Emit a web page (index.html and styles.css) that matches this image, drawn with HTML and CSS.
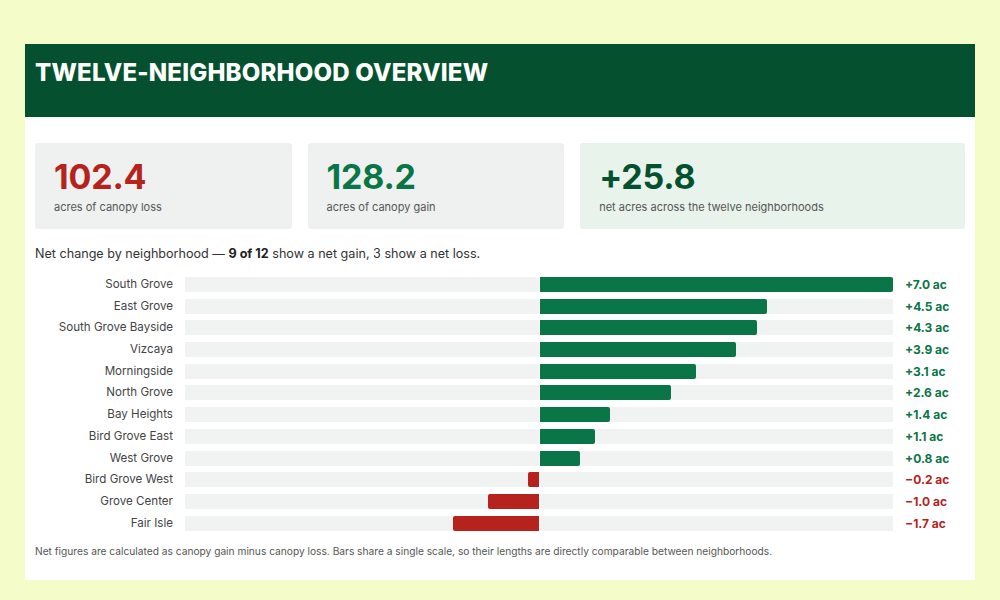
FILE: index.html
```html
<!DOCTYPE html>
<html lang="en">
<head>
<meta charset="utf-8">
<title>Twelve-Neighborhood Overview</title>
<link rel="stylesheet" href="styles.css">
</head>
<body>
<div class="card">
  <header class="header">
    <h1 class="title">TWELVE-NEIGHBORHOOD OVERVIEW</h1>
  </header>
  <section class="content">
    <div class="stats">
      <div class="stat">
        <div class="stat-num loss">102.4</div>
        <div class="stat-label">acres of canopy loss</div>
      </div>
      <div class="stat">
        <div class="stat-num gain">128.2</div>
        <div class="stat-label">acres of canopy gain</div>
      </div>
      <div class="stat stat-net">
        <div class="stat-num net">+25.8</div>
        <div class="stat-label">net acres across the twelve neighborhoods</div>
      </div>
    </div>
    <p class="subtitle">Net change by neighborhood — <strong>9 of 12</strong> show a net gain, 3 show a net loss.</p>
    <div class="chart">
      <div class="row"><span class="name">South Grove</span><div class="track"><div class="half neg"></div><div class="half pos"><div class="bar bar-pos" style="width:100%"></div></div></div><span class="val pos-t">+7.0 ac</span></div>
      <div class="row"><span class="name">East Grove</span><div class="track"><div class="half neg"></div><div class="half pos"><div class="bar bar-pos" style="width:64.29%"></div></div></div><span class="val pos-t">+4.5 ac</span></div>
      <div class="row"><span class="name">South Grove Bayside</span><div class="track"><div class="half neg"></div><div class="half pos"><div class="bar bar-pos" style="width:61.43%"></div></div></div><span class="val pos-t">+4.3 ac</span></div>
      <div class="row"><span class="name">Vizcaya</span><div class="track"><div class="half neg"></div><div class="half pos"><div class="bar bar-pos" style="width:55.71%"></div></div></div><span class="val pos-t">+3.9 ac</span></div>
      <div class="row"><span class="name">Morningside</span><div class="track"><div class="half neg"></div><div class="half pos"><div class="bar bar-pos" style="width:44.29%"></div></div></div><span class="val pos-t">+3.1 ac</span></div>
      <div class="row"><span class="name">North Grove</span><div class="track"><div class="half neg"></div><div class="half pos"><div class="bar bar-pos" style="width:37.14%"></div></div></div><span class="val pos-t">+2.6 ac</span></div>
      <div class="row"><span class="name">Bay Heights</span><div class="track"><div class="half neg"></div><div class="half pos"><div class="bar bar-pos" style="width:20%"></div></div></div><span class="val pos-t">+1.4 ac</span></div>
      <div class="row"><span class="name">Bird Grove East</span><div class="track"><div class="half neg"></div><div class="half pos"><div class="bar bar-pos" style="width:15.71%"></div></div></div><span class="val pos-t">+1.1 ac</span></div>
      <div class="row"><span class="name">West Grove</span><div class="track"><div class="half neg"></div><div class="half pos"><div class="bar bar-pos" style="width:11.43%"></div></div></div><span class="val pos-t">+0.8 ac</span></div>
      <div class="row"><span class="name">Bird Grove West</span><div class="track"><div class="half neg"><div class="bar bar-neg" style="width:2.86%"></div></div><div class="half pos"></div></div><span class="val neg-t">−0.2 ac</span></div>
      <div class="row"><span class="name">Grove Center</span><div class="track"><div class="half neg"><div class="bar bar-neg" style="width:14.29%"></div></div><div class="half pos"></div></div><span class="val neg-t">−1.0 ac</span></div>
      <div class="row"><span class="name">Fair Isle</span><div class="track"><div class="half neg"><div class="bar bar-neg" style="width:24.29%"></div></div><div class="half pos"></div></div><span class="val neg-t">−1.7 ac</span></div>
    </div>
    <p class="note">Net figures are calculated as canopy gain minus canopy loss. Bars share a single scale, so their lengths are directly comparable between neighborhoods.</p>
  </section>
</div>
</body>
</html>
```
FILE: styles.css
```css
* { box-sizing: border-box; }
html, body { margin: 0; padding: 0; }
body {
  background: #f4fdc9;
  font-family: Inter, "Liberation Sans", Arial, sans-serif;
  color: #333;
  padding-top: 44px;
}
.card {
  width: 950px;
  margin: 0 auto;
  background: #ffffff;
  height: 536px;
}
.header {
  background: #05512f;
  padding: 13px 10px 29px;
}
.title {
  margin: 0;
  color: #ffffff;
  font-size: 24px;
  line-height: 31px;
  font-weight: 800;
  letter-spacing: 0.2px;
}
.content {
  padding: 26px 10px 0;
}
.stats {
  display: grid;
  grid-template-columns: 2fr 2fr 3fr;
  gap: 16px;
}
.stat {
  background: #eef1f0;
  border-radius: 3px;
  padding: 18px 19px 15px;
  height: 86px;
}
.stat-net { background: #e8f3ec; }
.stat-num {
  font-size: 34px;
  line-height: 32px;
  font-weight: 700;
  letter-spacing: -0.2px;
}
.loss { color: #b5231c; }
.gain { color: #0a7546; }
.net { color: #05512f; }
.stat-label {
  margin-top: 7px;
  font-size: 11px;
  line-height: 14px;
  color: #555;
}
.subtitle {
  margin: 16px 0 0;
  font-size: 12.6px;
  line-height: 18px;
  color: #333;
}
.subtitle strong { font-weight: 700; color: #222; }
.chart {
  margin-top: 14px;
  display: flex;
  flex-direction: column;
  gap: 6.7px;
}
.row {
  display: grid;
  grid-template-columns: 138px 1fr 60px;
  column-gap: 12px;
  align-items: center;
  height: 15px;
}
.name {
  text-align: right;
  font-size: 11.6px;
  line-height: 15px;
  color: #444;
  white-space: nowrap;
}
.track {
  display: flex;
  gap: 1px;
  height: 15px;
}
.half {
  flex: 1;
  background: #f1f2f2;
  display: flex;
  height: 15px;
}
.half.neg { justify-content: flex-end; }
.bar { height: 15px; }
.bar-pos { background: #0a7546; border-radius: 0 2px 2px 0; }
.bar-neg { background: #b5231c; border-radius: 2px 0 0 2px; }
.val {
  font-size: 12px;
  font-weight: 700;
  line-height: 15px;
  white-space: nowrap;
}
.pos-t { color: #0a7546; }
.neg-t { color: #b5231c; }
.note {
  margin: 13px 0 0;
  font-size: 10.2px;
  line-height: 14px;
  color: #555;
}
```
